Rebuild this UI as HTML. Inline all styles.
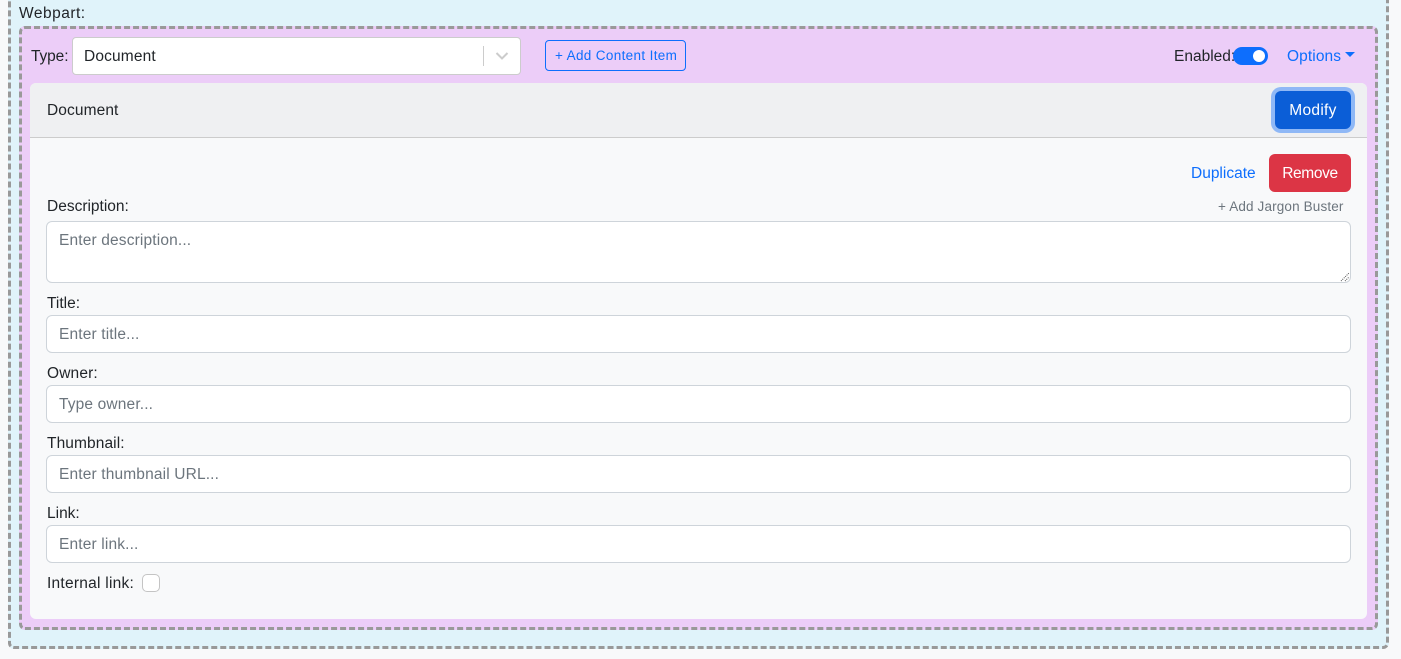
<!DOCTYPE html>
<html lang="en">
<head>
<meta charset="utf-8">
<title>Webpart</title>
<style>
html,body{margin:0;padding:0;width:1401px;height:659px;overflow:hidden;background:#f8f9fa;}
body{position:relative;font-family:"Liberation Sans",sans-serif;font-size:15.5px;color:#212529;}
div,span{position:absolute;box-sizing:border-box;}
.t{white-space:nowrap;line-height:20px;height:20px;}
.in{background:#fff;border:1px solid #ced4da;border-radius:6px;left:46px;width:1305px;}
.ph{color:#6c757d;left:59px;letter-spacing:.15px;}
</style>
</head>
<body>
<div style="left:8px;top:-10px;width:1381px;height:659px;background:#e0f3fa;border:3px dashed #999;border-radius:6px;"></div>
<span class="t" style="left:19px;top:4px;letter-spacing:.5px;">Webpart:</span>

<div style="left:19px;top:26px;width:1359px;height:604px;background:#eccdf8;border:3px dashed #999;border-radius:6px;"></div>

<span class="t" style="left:31px;top:47px;letter-spacing:-.1px;">Type:</span>
<div style="left:72px;top:37px;width:449px;height:38px;background:#fff;border:1px solid #ccc;border-radius:4px;"></div>
<span class="t" style="left:84px;top:47px;letter-spacing:.15px;">Document</span>
<div style="left:483px;top:46px;width:1px;height:20px;background:#ccc;"></div>
<svg style="position:absolute;left:494px;top:51px;" width="16" height="10" viewBox="0 0 16 10"><path d="M2.5 2 L8 7.5 L13.5 2" fill="none" stroke="#ccc" stroke-width="2"/></svg>

<div style="left:545px;top:40px;width:141px;height:31px;border:1px solid #0d6efd;border-radius:4px;"></div>
<span class="t" style="left:555px;top:46px;font-size:13.5px;color:#0d6efd;letter-spacing:.35px;">+ Add Content Item</span>

<span class="t" style="left:1174px;top:47px;">Enabled:</span>
<div style="left:1233px;top:47px;width:35px;height:18px;background:#0d6efd;border-radius:9px;"></div>
<div style="left:1253px;top:50px;width:12px;height:12px;background:#fff;border-radius:50%;"></div>
<span class="t" style="left:1287px;top:47px;color:#0d6efd;letter-spacing:.1px;">Options</span>
<div style="left:1345px;top:52px;width:0;height:0;border-left:5px solid transparent;border-right:5px solid transparent;border-top:5px solid #0d6efd;"></div>

<div style="left:30px;top:83px;width:1337px;height:536px;background:#f8f9fa;border-radius:6px;"></div>
<div style="left:30px;top:83px;width:1337px;height:55px;background:#eff0f2;border-bottom:1px solid #ccc;border-radius:6px 6px 0 0;"></div>
<span class="t" style="left:47px;top:101px;letter-spacing:.1px;">Document</span>
<div style="left:1275px;top:91px;width:76px;height:38px;background:#0b5ed7;border-radius:6px;box-shadow:0 0 0 4px #8fb8f6;"></div>
<span class="t" style="left:1275px;top:101px;width:76px;text-align:center;color:#fff;letter-spacing:.3px;">Modify</span>

<span class="t" style="left:1191px;top:164px;color:#0d6efd;">Duplicate</span>
<div style="left:1269px;top:154px;width:82px;height:38px;background:#dc3545;border-radius:6px;"></div>
<span class="t" style="left:1269px;top:164px;width:82px;text-align:center;color:#fff;letter-spacing:-.35px;">Remove</span>

<span class="t" style="left:47px;top:197px;">Description:</span>
<span class="t" style="left:1218px;top:197px;font-size:13.5px;color:#6c757d;letter-spacing:.15px;">+ Add Jargon Buster</span>
<div class="in" style="top:221px;height:62px;"></div>
<span class="t ph" style="top:231px;">Enter description...</span>
<svg style="position:absolute;left:1340px;top:272px;" width="10" height="10" viewBox="0 0 10 10"><path d="M1 9 L9 1 M5 9 L9 5" stroke="#555" stroke-width="1" stroke-dasharray="1 1" fill="none"/></svg>

<span class="t" style="left:47px;top:294px;">Title:</span>
<div class="in" style="top:315px;height:38px;"></div>
<span class="t ph" style="top:325px;">Enter title...</span>

<span class="t" style="left:47px;top:364px;letter-spacing:.15px;">Owner:</span>
<div class="in" style="top:385px;height:38px;"></div>
<span class="t ph" style="top:395px;">Type owner...</span>

<span class="t" style="left:47px;top:434px;letter-spacing:.1px;">Thumbnail:</span>
<div class="in" style="top:455px;height:38px;"></div>
<span class="t ph" style="top:465px;">Enter thumbnail URL...</span>

<span class="t" style="left:47px;top:504px;">Link:</span>
<div class="in" style="top:525px;height:38px;"></div>
<span class="t ph" style="top:535px;">Enter link...</span>

<span class="t" style="left:47px;top:574px;letter-spacing:.25px;">Internal link:</span>
<div style="left:142px;top:574px;width:18px;height:18px;background:#fff;border:1px solid #c4c4c4;border-radius:5px;"></div>
</body>
</html>
